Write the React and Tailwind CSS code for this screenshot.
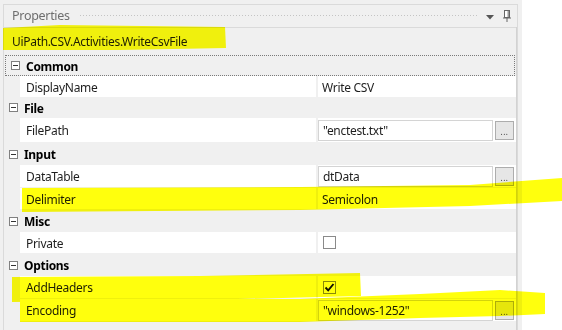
import React from "react";

const font = { fontFamily: '"Segoe UI", "Noto Sans", sans-serif' };

function Minus() {
  return (
    <div className="w-[9px] h-[9px] border border-[#808080] bg-white flex items-center justify-center">
      <div className="w-[5px] h-px bg-[#333]" />
    </div>
  );
}

function Category({ label, focused, h = "h-[22px]" }) {
  return (
    <div
      className={
        h +
        " flex items-center pl-[5px] " +
        (focused ? "border border-dotted border-[#7a7a7a] mx-px" : "")
      }
    >
      <Minus />
      <span className="ml-[6px] mt-[2px] text-[12px] tracking-[-0.3px] font-bold text-black leading-none">{label}</span>
    </div>
  );
}

function Ellipsis() {
  return (
    <div className="w-[19px] h-[19px] ml-[2px] border border-[#adadad] bg-[#e6e6e6] flex items-end justify-center pb-[3px]">
      <span className="text-[8px] leading-none tracking-[0.5px] text-[#333]">...</span>
    </div>
  );
}

function Row({ name, children, h = "h-[21px]", gap = true }) {
  return (
    <div className={"flex pl-[16px] " + h + (gap ? " mb-px" : "")}>
      <div className="w-[296px] bg-white flex items-center pl-[6px] pt-[2px] text-[12px] tracking-[-0.3px] text-[#1e1e1e]">{name}</div>
      <div className="w-[2px]" />
      <div className="w-[198px] bg-white flex items-center text-[12px] tracking-[-0.3px] text-[#1e1e1e]">{children}</div>
    </div>
  );
}

function TextBoxValue({ value }) {
  return (
    <div className="flex items-center w-full h-full pr-[2px]">
      <div className="flex-1 h-[21px] border border-[#d4d4d4] bg-white flex items-center pl-[4px] pt-px">{value}</div>
      <Ellipsis />
    </div>
  );
}

function Check({ checked }) {
  return (
    <div className="ml-[5px] w-[13px] h-[13px] border border-[#8a8a8a] bg-white flex items-center justify-center">
      {checked && (
        <svg width="11" height="11" viewBox="0 0 11 11">
          <path d="M1.5 5.5 L4.2 8.3 L9.5 2" fill="none" stroke="#111" strokeWidth="1.9" />
        </svg>
      )}
    </div>
  );
}

export default function App() {
  return (
    <div className="relative w-[562px] h-[330px] bg-white overflow-hidden flex" style={font}>
      <div className="w-[522px] h-full bg-[#f0f0f0] pl-[3px] pt-[4px]">
        <div className="w-[515px] h-full border-l border-t border-r border-[#dadada] flex flex-col">
          <div className="h-[23px] flex items-center border-b border-[#dadada] bg-[#f0f0f0]">
            <span className="pl-[8px] text-[12.5px] tracking-[-0.3px] text-[#6e6e6e] leading-none">Properties</span>
            <div
              className="flex-1 h-[4px] ml-[9px] mr-[9px]"
              style={{
                backgroundImage: "radial-gradient(#c4c4c4 0.7px, transparent 0.8px)",
                backgroundSize: "3px 3px",
              }}
            />
            <svg width="8" height="5" viewBox="0 0 8 5" className="mt-[3px]">
              <path d="M0 0 H8 L4 4.5 Z" fill="#555" />
            </svg>
            <svg width="10" height="12" viewBox="0 0 10 12" className="ml-[8px] mr-[5px]">
              <rect x="2.5" y="0.5" width="5" height="7" fill="#fff" stroke="#666" />
              <rect x="5.5" y="1" width="1.5" height="6" fill="#999" />
              <path d="M1 8 H9" stroke="#666" />
              <path d="M5 8 V12" stroke="#666" />
            </svg>
          </div>
          <div className="h-[27px] flex items-center pl-[8px] text-[12px] tracking-[-0.3px] text-[#1e1e1e]">
            UiPath.CSV.Activities.WriteCsvFile
          </div>
          <div className="pr-px">
            <Category label="Common" focused h="h-[21px]" />
            <Row name="DisplayName" gap={false}>
              <span className="pl-[4px] pt-[2px]">Write CSV</span>
            </Row>
            <Category label="File" h="h-[21px]" />
            <Row name="FilePath" h="h-[24px]">
              <TextBoxValue value={'"enctest.txt"'} />
            </Row>
            <Category label="Input" />
            <Row name="DataTable" h="h-[22px]">
              <TextBoxValue value="dtData" />
            </Row>
            <Row name="Delimiter">
              <span className="pl-[4px] pt-[2px]">Semicolon</span>
            </Row>
            <Category label="Misc" />
            <Row name="Private">
              <Check />
            </Row>
            <Category label="Options" />
            <Row name="AddHeaders" h="h-[22px]">
              <Check checked />
            </Row>
            <Row name="Encoding" h="h-[22px]">
              <TextBoxValue value={'"windows-1252"'} />
            </Row>
          </div>
        </div>
      </div>
      <div className="absolute w-[1px] h-[303px] left-[516px] top-[27px] bg-[#d2d2d2]" />
      <svg
        className="absolute inset-0 pointer-events-none mix-blend-multiply"
        width="562"
        height="330"
        viewBox="0 0 562 330"
      >
        <g fill="#ffff00" opacity="0.95">
          <polygon points="3,28 60,25 225,27 226,48 120,50 3,50" />
          <polygon points="22,188 300,187 470,185 562,178 562,201 470,206 300,210 22,212" />
          <polygon points="12,277 200,276 360,273 361,296 200,300 12,302" />
          <polygon points="20,299 300,299 420,294 500,290 545,293 545,314 500,316 420,318 300,322 20,322" />
        </g>
      </svg>
    </div>
  );
}
